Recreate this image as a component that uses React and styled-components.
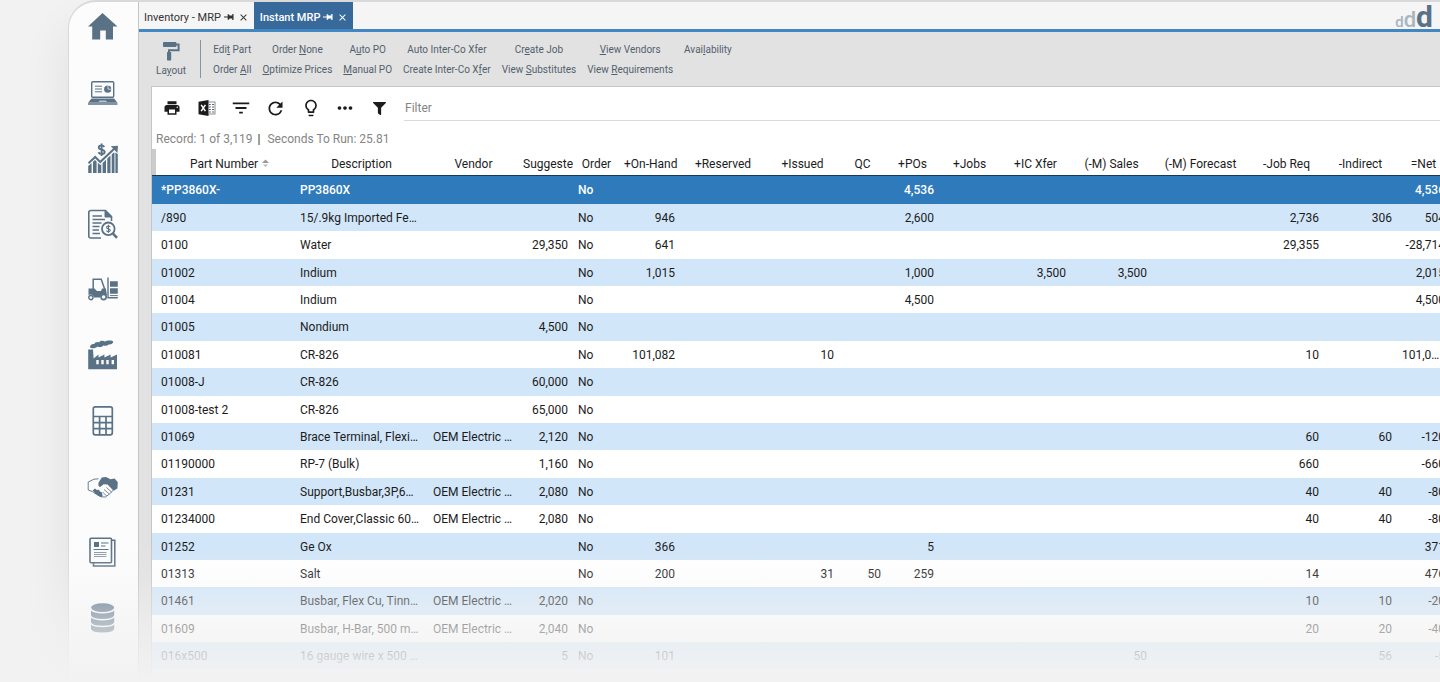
import React from "react";
import styled, { createGlobalStyle, css } from "styled-components";
import { MdPrint, MdFilterList, MdRefresh, MdLightbulbOutline, MdMoreHoriz, MdClose } from "react-icons/md";
import { FaFilter } from "react-icons/fa";

const GlobalStyle = createGlobalStyle`
  *, *::before, *::after { box-sizing: border-box; }
  body {
    margin: 0;
    background: #f2f2f2;
    font-family: Roboto, "Liberation Sans", sans-serif;
    color: #1c1c1c;
  }
  button, input { font: inherit; color: inherit; }
`;

const slate = "#5a7286";

const Page = styled.div`
  position: relative;
  height: 100vh;
  display: flex;
  padding-left: 68px;
  overflow: hidden;
  background: #f2f2f2;

  &::after {
    content: "";
    position: absolute;
    inset: auto 0 0;
    height: 138px;
    pointer-events: none;
    background: linear-gradient(
      to top,
      rgba(242, 242, 242, 1) 0,
      rgba(242, 242, 242, 0.82) 27px,
      rgba(242, 242, 242, 0.63) 54px,
      rgba(242, 242, 242, 0.38) 81px,
      rgba(242, 242, 242, 0.14) 109px,
      rgba(242, 242, 242, 0) 138px
    );
  }
`;

const Frame = styled.div`
  flex: 1;
  min-width: 0;
  display: flex;
  border: 2px solid #d9d9d9;
  border-width: 2px 0 0 1px;
  border-top-left-radius: 28px;
  background: #fcfcfc;
  box-shadow: -8px 24px 44px rgba(0, 0, 0, 0.06);
  overflow: hidden;
`;

const Sidebar = styled.aside`
  flex: none;
  width: 70px;
  border-right: 1px solid #c4c4c4;
`;

const SideNav = styled.nav`
  height: 631px;
  padding-top: 10px;
  display: flex;
  flex-direction: column;
  align-items: center;
  justify-content: space-between;
`;

const SideLink = styled.a`
  display: block;
  width: 30px;
  height: 30px;
  margin-right: 2px;
  color: ${slate};
  svg { display: block; overflow: visible; }
`;

const Main = styled.main`
  flex: 1;
  min-width: 0;
  display: flex;
  flex-direction: column;
  background: #e2e2e2;
`;

const TabBar = styled.header`
  flex: none;
  display: flex;
  justify-content: space-between;
  height: 30px;
  background: #f5f5f5;
  border-bottom: 3px solid #4286c2;
`;

const Tabs = styled.div`
  display: flex;
`;

const Tab = styled.div`
  display: flex;
  align-items: center;
  gap: 3px;
  padding: 3px 5px 0 6px;
  font-size: 11px;
  white-space: nowrap;
  ${(p) =>
    p.$active
      ? css`background: #38699b; color: #fff; font-weight: 500;`
      : css`color: #333; padding-left: 5px;`}
`;

const TabButton = styled.button`
  border: 0;
  padding: 0;
  background: none;
  display: flex;
  align-items: center;
`;

const Logo = styled.div`
  display: flex;
  align-items: baseline;
  padding-right: 7px;
  line-height: 29px;
`;

const LogoLetter = styled.span`
  font-size: ${(p) => p.$size}px;
  font-weight: ${(p) => (p.$dark ? 700 : 500)};
  color: ${(p) => (p.$dark ? slate : "#a9b4be")};
`;

const Ribbon = styled.div`
  flex: none;
  display: flex;
  align-items: center;
  height: 54px;
  padding-left: 18px;
  color: #53616d;
  font-size: 10px;
`;

const LayoutButton = styled.button`
  border: 0;
  padding: 0;
  width: 28px;
  background: none;
  display: flex;
  flex-direction: column;
  align-items: center;
  gap: 4px;
  font-size: 10px;
  line-height: 12px;
`;

const Divider = styled.span`
  width: 1px;
  height: 38px;
  margin: 0 12px 0 15px;
  background: #8794a0;
`;

const Commands = styled.div`
  display: grid;
  grid-auto-flow: column;
  grid-template-rows: 20px 20px;
  column-gap: 11px;
`;

const Command = styled.button`
  border: 0;
  padding: 0;
  background: none;
  white-space: nowrap;
`;

const Panel = styled.section`
  flex: 1;
  min-height: 0;
  margin-left: 12px;
  border: 1px solid #c6c6c6;
  border-width: 1px 0 0 1px;
  background: #fff;
  overflow: hidden;
`;

const PanelTools = styled.div`
  display: flex;
  align-items: center;
  height: 42px;
  padding-left: 11px;
`;

const IconRow = styled.div`
  flex: none;
  width: 226px;
  display: flex;
  justify-content: space-between;
`;

const IconButton = styled.button`
  border: 0;
  padding: 0;
  width: 18px;
  height: 18px;
  background: none;
  display: flex;
  align-items: center;
  justify-content: center;
  svg { flex: none; }
`;

const FilterInput = styled.input`
  flex: 1;
  min-width: 0;
  height: 28px;
  margin: 0 0 8px 15px;
  padding: 3px 1px 0;
  align-self: flex-end;
  border: 0;
  border-bottom: 1px solid #d9d9d9;
  outline: 0;
  background: none;
  font-size: 12px;
  &::placeholder { color: #858585; opacity: 1; }
`;

const Status = styled.div`
  display: flex;
  gap: 5px;
  height: 20px;
  padding-left: 4px;
  line-height: 20px;
  font-size: 12px;
  color: #858585;
`;

const Bar = styled.span`
  color: #222;
  margin-right: 2px;
`;

const Grid = styled.table`
  width: 1298px;
  table-layout: fixed;
  border-collapse: separate;
  border-spacing: 0;
  font-size: 12px;
`;

const HeadCell = styled.th`
  height: 27px;
  padding: 3px 4px 0;
  border-bottom: 1px solid #17365c;
  font-weight: 400;
  text-align: center;
  white-space: nowrap;
  overflow: hidden;
`;

const HandleCell = styled(HeadCell)`
  padding: 0;
  background: #cbcbcb;
`;

const SortLabel = styled.span`
  display: inline-flex;
  align-items: center;
  gap: 4px;
  padding-left: 8px;
`;

const Row = styled.tr`
  height: 27px;
  background: #fff;
  &:nth-child(5n + 1), &:nth-child(5n + 3) { height: 28px; }
  &:nth-child(even) { background: #d2e6f9; }
  ${(p) =>
    p.$selected &&
    css`
      background: #2e7abb;
      color: #fff;
      font-weight: 500;
    `}
`;

const Cell = styled.td`
  padding: 0 5px;
  text-align: ${(p) => (p.$left ? "left" : "right")};
  white-space: nowrap;
  overflow: hidden;
  text-overflow: ellipsis;
`;

function Icon({ children }) {
  return (
    <svg width="30" height="30" viewBox="0 0 30 30" fill="none" stroke="currentColor" aria-hidden="true">
      {children}
    </svg>
  );
}

const HomeIcon = () => (
  <Icon>
    <path stroke="none" fill="currentColor" d="M14.5 1 29.5 14.5H25V27.5H17.8V18.5H12.2V27.5H4.2V14.5H0Z" />
  </Icon>
);

const LaptopIcon = () => (
  <Icon>
    <rect x="3.7" y="3.7" width="22" height="15.6" rx="1" strokeWidth="1.4" />
    <path d="M7 8.2H14M7 11H14M7 13.8H14" strokeWidth="1" />
    <circle cx="19.7" cy="11.2" r="3.6" fill="currentColor" stroke="none" />
    <path d="M20 11.2V7.2M20 11.2H24" stroke="#fcfcfc" strokeWidth=".7" />
    <path d="M3.5 20.5H26L29.5 24.8H0Z" fill="currentColor" stroke="none" />
    <path d="M11.5 22.5H18L19 24H10.5Z" fill="#b8c3cc" stroke="none" />
    <path d="M0 26H29.5" strokeWidth="1.4" />
  </Icon>
);

const GrowthIcon = () => (
  <Icon>
    <path fill="currentColor" stroke="none" d="M.2 23l3.4-3V30H.2ZM5 18.8l2-1.7 1.6 1.4V30H5ZM9.8 19.8l2.5 2.2 1-.8V30H9.8ZM14.6 20l3.4-3.2V30h-3.4ZM19.3 15.5l3.2-3V30h-3.2ZM23.7 11.5l2-2 .8.6V30h-2.8ZM27.4 9.5l2.4 1.6V30h-2.4Z" />
    <path d="M.5 20.2 7.2 14l5 5L26.5 5.5" strokeWidth="2" />
    <path d="M22.8 3.2 30 2.8 29.4 10Z" fill="currentColor" stroke="none" />
    <path d="M16.3 3.9C15.6 2.8 14.7 2.4 13.5 2.4 11.8 2.4 10.8 3.2 10.8 4.4 10.8 7.4 16.7 5.8 16.7 9 16.7 10.3 15.4 11 13.7 11 12.2 11 11.1 10.4 10.4 9.2M13.6.4V13" strokeWidth="1.9" />
  </Icon>
);

const AuditIcon = () => (
  <Icon>
    <path d="M13 29H3Q.8 29 .8 27V3.5Q.8 1.5 3 1.5H17.5L23.5 7.5V12" strokeWidth="1.6" />
    <path d="M17 1V8H24Z" fill="currentColor" />
    <path d="M4.5 7H14M4.5 10.5H17M4.5 14H13.5M4.5 17.5H11.5M4.5 21H11M4.5 24.5H12" strokeWidth="1.4" />
    <circle cx="20.3" cy="19.8" r="6.3" strokeWidth="1.8" />
    <path d="M25 24.6 29 28.8" strokeWidth="2.6" />
    <path d="M22.2 18C21.5 16.6 18.6 16.8 18.6 18.4 18.6 20.2 22.2 19.4 22.2 21.3 22.2 23 19 23 18.4 21.6M20.4 15.8V24" strokeWidth="1.1" />
  </Icon>
);

const ForkliftIcon = () => (
  <Icon>
    <path d="M5.2 14V4.2H13.2L17 15" strokeWidth="1.5" />
    <path d="M.5 13.5H6.5L9 16H13L14 13.5H17.8L19 20H16.5a3.8 3.8 0 0 0-4.5 2.4H6A3.6 3.6 0 0 0 .5 20.2Z" fill="currentColor" stroke="none" />
    <circle cx="2.9" cy="22.6" r="2.1" strokeWidth="1.4" />
    <circle cx="15.6" cy="22" r="2.6" strokeWidth="1.6" />
    <path d="M20 2.5V22.8H29.8" strokeWidth="1.4" />
    <path d="M22 6.2H29.8V11.8H22ZM22 13.2H29.8V18.8H22Z" fill="currentColor" stroke="none" />
    <path d="M22 20.6H29.8" strokeWidth="1" />
  </Icon>
);

const FactoryIcon = () => (
  <Icon>
    <path fill="currentColor" stroke="none" d="M.2 29.2V9.6H5L5.6 18.5 10.5 14.5V17.5L16.4 14.5V17.5L22.6 14.5V17.5L29 14.5V29.2Z" />
    <path d="M9.5 20v4.2M14.5 20v4.2M19.5 20v4.2M24.8 20v4.2" stroke="#fcfcfc" strokeWidth="2.4" />
    <path fill="currentColor" stroke="none" d="M2 7.6C1.6 5.2 4.2 3.4 6.2 4 7 2 9.6 1.4 11 2.4 12.6.4 15.6.6 16.6 1.6 18.6-.2 25.2.2 25.2 1.6 25.2 3.8 22.6 4.8 20.6 4.4 19 6 16.6 6 15.4 5.4 13.8 7.2 10.8 7.2 9.6 6.4 8.2 8 4 8.8 2 7.6Z" />
  </Icon>
);

const CalculatorIcon = () => (
  <Icon>
    <rect x="5.3" y=".8" width="19" height="28" rx="2" strokeWidth="1.7" />
    <path d="M5.3 10.5H24.3M5.3 16.6H24.3M5.3 22.6H24.3M11.6 10.5V28.8M18 10.5V28.8" strokeWidth="1.7" />
  </Icon>
);

const HandshakeIcon = () => (
  <Icon>
    <path d="M10.5 6.8 6 7.2.2 10V18L4.6 19.6 8 22 13 24.8 17.5 25 22.5 21.2 25 18.2" strokeWidth=".9" strokeLinejoin="round" />
    <path fill="currentColor" stroke="none" d="M10.6 10.5 13.8 5.6 18 5 22.5 7.2 26.6 6.6 29.8 10.2 29.4 16.6 25.6 18.8 19.5 12.6 15.6 12.2 12.2 15Q9.6 14.2 10.6 10.5Z" />
    <path fill="currentColor" stroke="none" d="M4.6 18.4 7 16.6 8.8 18 10.8 17.8 12 19.6 13.8 20.2 14.6 23.4 13.4 25.2 11.4 24.2 10 23.8 8.8 22.2 6.8 21.8 6.2 20Z" />
    <path d="M16 17.5 21.2 21.8M18.4 15.4 23.4 20M14.6 20 18.6 24" strokeWidth=".8" />
  </Icon>
);

const NewsIcon = () => (
  <Icon>
    <path d="M23.8 3.2H26.8V29H5.5V26.2" strokeWidth="1.5" />
    <rect x="2" y="1.2" width="21.5" height="24.6" rx="1" strokeWidth="1.6" />
    <path d="M6 5H11V10H6Z" fill="currentColor" stroke="none" />
    <path d="M13 6H20.5M13 9H17.5M5.5 12.5H20.5" strokeWidth="1.1" />
    <path d="M6 15.5H18.5M6 17.5H18.5M6 19.5H18.5" strokeWidth="1" opacity=".7" />
  </Icon>
);

const DatabaseIcon = () => (
  <Icon>
    <ellipse cx="14.6" cy="4.6" rx="11.6" ry="4.3" fill="currentColor" stroke="none" />
    <path
      fill="currentColor"
      stroke="none"
      d="M3 7.6Q5 10.4 14.6 10.4T26.2 7.6V12.2Q25 16 14.6 16T3 12.2ZM3 14.6Q5 17.4 14.6 17.4T26.2 14.6V19.2Q25 22.8 14.6 22.8T3 19.2ZM3 21.6Q5 24.2 14.6 24.2T26.2 21.6V26Q25 29.6 14.6 29.6T3 26Z"
    />
  </Icon>
);

const RollerIcon = () => (
  <svg width="17" height="19" viewBox="0 0 17 19" fill={slate} aria-hidden="true">
    <rect x="0" y="0" width="13.4" height="5" rx=".8" />
    <path d="M12 2.4H15.6V8.2H6V11" fill="none" stroke={slate} strokeWidth="2" />
    <rect x="4" y="10" width="4.2" height="8.4" rx=".6" />
  </svg>
);

const PinIcon = () => (
  <svg width="11" height="8" viewBox="0 0 12 8" aria-hidden="true">
    <path d="M0 3.5H4V1H5.2L6.2 2.4H9V.8H10.4V7.2H9V5.6H6.2L5.2 7H4V4.5H0Z" fill="currentColor" />
  </svg>
);

const ExcelIcon = () => (
  <svg width="18" height="16" viewBox="0 0 18 16" aria-hidden="true">
    <rect x="9.5" y="2" width="7.5" height="12" fill="#fff" stroke="#8a8f94" />
    <path d="M11 4.5H12.8M11 7H12.8M11 9.5H12.8M11 12H12.8M14 4.5H16M14 7H16M14 9.5H16M14 12H16" stroke="#596068" strokeWidth="1.2" />
    <path d="M.5 1.8 10.5 0V16L.5 14.2Z" fill="#1c1c1c" />
    <path d="M3.2 4.8 7.4 11.2M7.4 4.8 3.2 11.2" stroke="#fff" strokeWidth="1.5" />
  </svg>
);

const SortIcon = () => (
  <svg width="7" height="9" viewBox="0 0 8 9" aria-hidden="true">
    <path d="M0 4 4 0 8 4Z" fill="#999" />
    <path d="M1 5.5H7L4 8.5Z" fill="#bbb" />
  </svg>
);

const sideItems = [
  ["Home", HomeIcon],
  ["Dashboard", LaptopIcon],
  ["Sales", GrowthIcon],
  ["Quotes", AuditIcon],
  ["Inventory", ForkliftIcon],
  ["Production", FactoryIcon],
  ["Accounting", CalculatorIcon],
  ["Partners", HandshakeIcon],
  ["Reports", NewsIcon],
  ["Data", DatabaseIcon],
];

const commands = [
  <>Edi<u>t</u> Part</>,
  <>Order <u>A</u>ll</>,
  <>Order <u>N</u>one</>,
  <><u>O</u>ptimize Prices</>,
  <>A<u>u</u>to PO</>,
  <><u>M</u>anual PO</>,
  <>Auto Inter-Co Xfer</>,
  <>Create Inter-Co X<u>f</u>er</>,
  <>Cr<u>e</u>ate Job</>,
  <>View <u>S</u>ubstitutes</>,
  <><u>V</u>iew Vendors</>,
  <>View <u>R</u>equirements</>,
  <>Avai<u>l</u>ability</>,
];

const tools = [
  ["Print", <MdPrint size={18} />],
  ["Export to Excel", <ExcelIcon />],
  ["Sort", <MdFilterList size={22} />],
  ["Refresh", <MdRefresh size={21} />],
  ["Hints", <MdLightbulbOutline size={20} />],
  ["More", <MdMoreHoriz size={22} />],
  ["Filter", <FaFilter size={13} />],
];

const columns = [
  { key: "part", label: "Part Number", width: 139, left: true, sort: true },
  { key: "desc", label: "Description", width: 133, left: true },
  { key: "vendor", label: "Vendor", width: 91, left: true },
  { key: "suggested", label: "Suggested", width: 54 },
  { key: "order", label: "Order", width: 47, left: true },
  { key: "onHand", label: "+On-Hand", width: 60 },
  { key: "reserved", label: "+Reserved", width: 86 },
  { key: "issued", label: "+Issued", width: 73 },
  { key: "qc", label: "QC", width: 47 },
  { key: "pos", label: "+POs", width: 53 },
  { key: "jobs", label: "+Jobs", width: 61 },
  { key: "xfer", label: "+IC Xfer", width: 71 },
  { key: "sales", label: "(-M) Sales", width: 81 },
  { key: "forecast", label: "(-M) Forecast", width: 97 },
  { key: "jobReq", label: "-Job Req", width: 75 },
  { key: "indirect", label: "-Indirect", width: 73 },
  { key: "net", label: "=Net", width: 53 },
];

const oem = "OEM Electric Co.";

const rows = [
  { part: "*PP3860X-", desc: "PP3860X", pos: "4,536", net: "4,536" },
  { part: "/890", desc: "15/.9kg Imported Fence", onHand: "946", pos: "2,600", jobReq: "2,736", indirect: "306", net: "504" },
  { part: "0100", desc: "Water", suggested: "29,350", onHand: "641", jobReq: "29,355", net: "-28,714" },
  { part: "01002", desc: "Indium", onHand: "1,015", pos: "1,000", xfer: "3,500", sales: "3,500", net: "2,015" },
  { part: "01004", desc: "Indium", pos: "4,500", net: "4,500" },
  { part: "01005", desc: "Nondium", suggested: "4,500" },
  { part: "010081", desc: "CR-826", onHand: "101,082", issued: "10", jobReq: "10", net: "101,082.0" },
  { part: "01008-J", desc: "CR-826", suggested: "60,000" },
  { part: "01008-test 2", desc: "CR-826", suggested: "65,000" },
  { part: "01069", desc: "Brace Terminal, Flexible", vendor: oem, suggested: "2,120", jobReq: "60", indirect: "60", net: "-120" },
  { part: "01190000", desc: "RP-7 (Bulk)", suggested: "1,160", jobReq: "660", net: "-660" },
  { part: "01231", desc: "Support,Busbar,3P,6mm", vendor: oem, suggested: "2,080", jobReq: "40", indirect: "40", net: "-80" },
  { part: "01234000", desc: "End Cover,Classic 60mm", vendor: oem, suggested: "2,080", jobReq: "40", indirect: "40", net: "-80" },
  { part: "01252", desc: "Ge Ox", onHand: "366", pos: "5", net: "371" },
  { part: "01313", desc: "Salt", onHand: "200", issued: "31", qc: "50", pos: "259", jobReq: "14", net: "476" },
  { part: "01461", desc: "Busbar, Flex Cu, Tinned", vendor: oem, suggested: "2,020", jobReq: "10", indirect: "10", net: "-20" },
  { part: "01609", desc: "Busbar, H-Bar, 500 mm2", vendor: oem, suggested: "2,040", jobReq: "20", indirect: "20", net: "-40" },
  { part: "016x500", desc: "16 gauge wire x 500 mm", suggested: "5", onHand: "101", sales: "50", indirect: "56", net: "-5" },
];

function DocumentTab({ label, active }) {
  return (
    <Tab $active={active}>
      <span>{label}</span>
      <TabButton aria-label={`Pin ${label}`}><PinIcon /></TabButton>
      <TabButton aria-label={`Close ${label}`}><MdClose size={11} /></TabButton>
    </Tab>
  );
}

export default function App() {
  return (
    <Page>
      <GlobalStyle />
      <Frame>
        <Sidebar>
          <SideNav>
            {sideItems.map(([label, Glyph]) => (
              <SideLink key={label} href="#" aria-label={label}><Glyph /></SideLink>
            ))}
          </SideNav>
        </Sidebar>
        <Main>
          <TabBar>
            <Tabs>
              <DocumentTab label="Inventory - MRP" />
              <DocumentTab label="Instant MRP" active />
            </Tabs>
            <Logo>
              <LogoLetter $size={15}>d</LogoLetter>
              <LogoLetter $size={22}>d</LogoLetter>
              <LogoLetter $size={30} $dark>d</LogoLetter>
            </Logo>
          </TabBar>
          <Ribbon>
            <LayoutButton>
              <RollerIcon />
              <span>La<u>y</u>out</span>
            </LayoutButton>
            <Divider />
            <Commands>
              {commands.map((label, i) => (
                <Command key={i}>{label}</Command>
              ))}
            </Commands>
          </Ribbon>
          <Panel>
            <PanelTools>
              <IconRow>
                {tools.map(([label, glyph]) => (
                  <IconButton key={label} aria-label={label}>{glyph}</IconButton>
                ))}
              </IconRow>
              <FilterInput type="text" placeholder="Filter" aria-label="Filter records" />
            </PanelTools>
            <Status>
              <span>Record: 1 of 3,119</span>
              <Bar>|</Bar>
              <span>Seconds To Run: 25.81</span>
            </Status>
            <Grid>
              <colgroup>
                <col width="4" />
                {columns.map((c) => <col key={c.key} width={c.width} />)}
              </colgroup>
              <thead>
                <tr>
                  <HandleCell aria-label="Row" />
                  {columns.map((c) => (
                    <HeadCell key={c.key} scope="col">
                      {c.sort ? <SortLabel>{c.label}<SortIcon /></SortLabel> : c.label}
                    </HeadCell>
                  ))}
                </tr>
              </thead>
              <tbody>
                {rows.map((r, i) => (
                  <Row key={r.part} $selected={i === 0}>
                    <Cell />
                    {columns.map((c) => (
                      <Cell key={c.key} $left={c.left}>{c.key === "order" ? "No" : r[c.key]}</Cell>
                    ))}
                  </Row>
                ))}
              </tbody>
            </Grid>
          </Panel>
        </Main>
      </Frame>
    </Page>
  );
}
